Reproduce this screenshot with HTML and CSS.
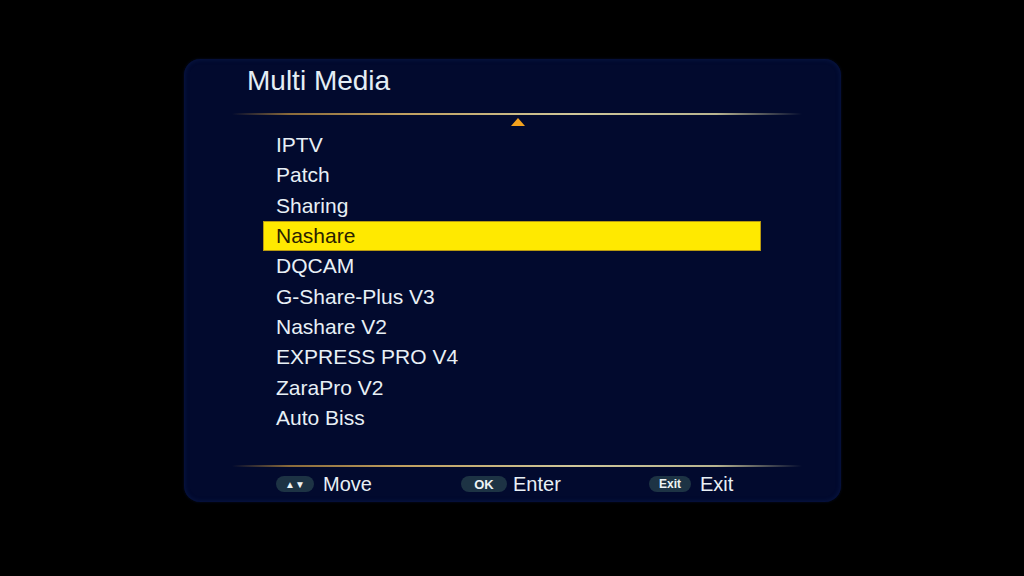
FILE: index.html
```html
<!DOCTYPE html>
<html>
<head>
<meta charset="utf-8">
<link rel="stylesheet" href="styles.css">
</head>
<body>
<div class="panel">
  <div class="title">Multi Media</div>
  <div class="rule"></div>
  <div class="arrow-row"><span class="arrow"></span></div>
  <ul class="menu">
    <li class="item">IPTV</li>
    <li class="item">Patch</li>
    <li class="item">Sharing</li>
    <li class="item active">Nashare</li>
    <li class="item">DQCAM</li>
    <li class="item">G-Share-Plus V3</li>
    <li class="item">Nashare V2</li>
    <li class="item">EXPRESS PRO V4</li>
    <li class="item">ZaraPro V2</li>
    <li class="item">Auto Biss</li>
  </ul>
  <div class="rule bottom"></div>
  <div class="footer">
    <div class="hint"><span class="pill pill-move">▲▼</span><span class="label">Move</span></div>
    <div class="hint"><span class="pill pill-ok">OK</span><span class="label">Enter</span></div>
    <div class="hint"><span class="pill pill-exit">Exit</span><span class="label">Exit</span></div>
  </div>
</div>
</body>
</html>
```
FILE: styles.css
```css
html, body {
  margin: 0;
  padding: 0;
  background: #000;
  width: 1024px;
  height: 576px;
  overflow: hidden;
}
body {
  font-family: "Liberation Sans", Arial, sans-serif;
}
.panel {
  width: 657px;
  height: 443px;
  margin: 59px 0 0 184px;
  border-radius: 16px;
  background: #020a2e;
  box-shadow: inset 0 0 5px rgba(30, 55, 130, 0.35), 0 0 3px rgba(20, 40, 110, 0.35);
  display: flex;
  flex-direction: column;
}
.title {
  height: 54px;
  padding-left: 63px;
  box-sizing: border-box;
  padding-top: 5px;
  font-size: 28px;
  line-height: 34px;
  color: #e4eef5;
}
.rule {
  margin-left: 48px;
  width: 570px;
  height: 2px;
  background: linear-gradient(to right, rgba(120, 90, 40, 0) 0%, #8a6a3a 10%, #c0a060 30%, #cfc79a 60%, #b8b490 85%, rgba(150, 150, 120, 0) 100%);
}
.arrow-row {
  height: 15px;
  padding-left: 327px;
  padding-top: 3px;
  box-sizing: border-box;
}
.arrow {
  display: block;
  width: 0;
  height: 0;
  border-left: 7px solid transparent;
  border-right: 7px solid transparent;
  border-bottom: 8px solid #f3a21e;
}
.menu {
  list-style: none;
  margin: 0;
  padding: 0;
  margin-left: 79px;
  width: 498px;
  height: 335px;
}
.item {
  height: 30.33px;
  line-height: 30px;
  padding-left: 13px;
  box-sizing: border-box;
  font-size: 21px;
  color: #e8f0f6;
}
.item.active {
  background: #ffe900;
  border: 1px solid #b89a10;
  color: #2a2200;
  padding-left: 12px;
  line-height: 28px;
}
.footer {
  display: grid;
  grid-template-columns: 185px 188px auto;
  padding-left: 92px;
  padding-top: 5px;
}
.hint {
  display: flex;
  align-items: center;
  height: 24px;
}
.pill {
  display: inline-flex;
  align-items: center;
  justify-content: center;
  height: 16px;
  border-radius: 8px;
  background: #1d3344;
  color: #eef3f5;
  margin-right: 9px;
}
.pill-move { width: 38px; font-size: 10px; }
.pill-ok { width: 46px; font-size: 13px; font-weight: bold; margin-right: 6px; }
.pill-exit { width: 42px; font-size: 12px; font-weight: bold; }
.label {
  font-size: 20px;
  color: #e8f0f6;
}
```
